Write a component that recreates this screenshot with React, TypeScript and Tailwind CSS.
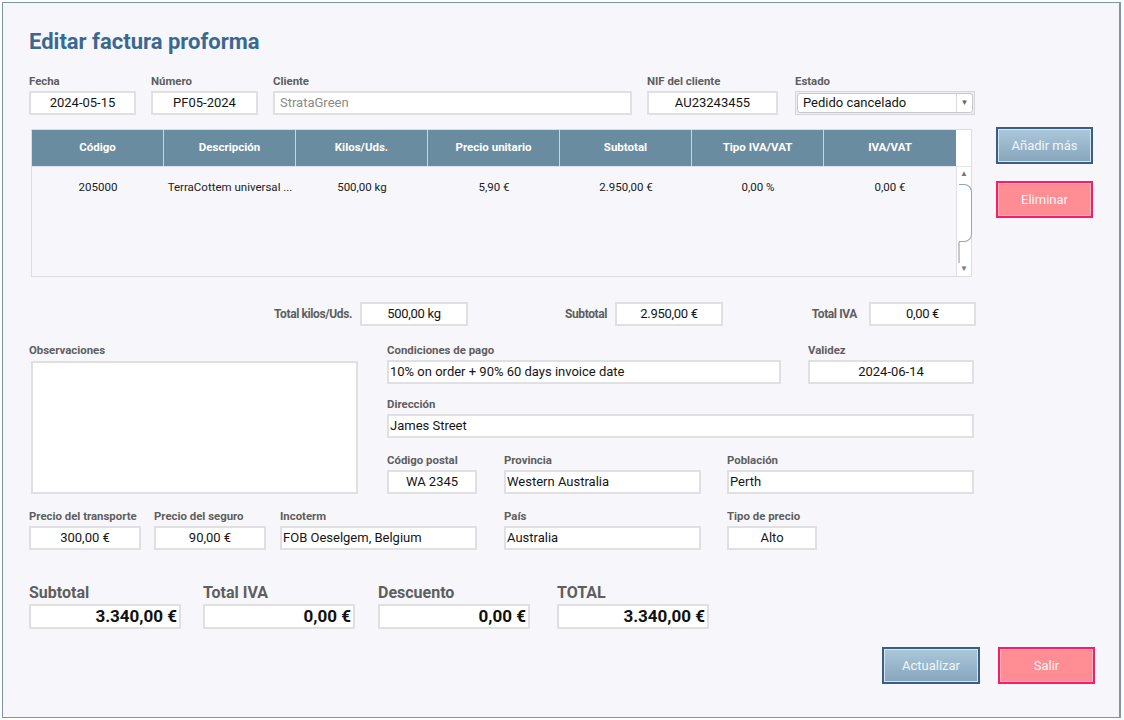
import React from "react"

const font = { fontFamily: "Roboto, 'Noto Sans', sans-serif" }

function Label({ children, className = "" }: { children: React.ReactNode; className?: string }) {
  return <div className={"h-4 text-[11.4px] leading-4 font-bold text-[#5e5e5e] whitespace-nowrap " + className}>{children}</div>
}

function Box({ children, align = "left", muted = false, className = "" }: { children?: React.ReactNode; align?: "left" | "center"; muted?: boolean; className?: string }) {
  return (
    <div
      className={
        "h-6 bg-white border-2 border-[#e0e0e3] text-[13px] leading-5 whitespace-nowrap overflow-hidden " +
        (align === "center" ? "text-center " : "pl-[1px] ") +
        (muted ? "text-[#8a8a8a] pl-[5px] " : "text-[#151515] ") +
        className
      }
    >
      {children}
    </div>
  )
}

function Field({ label, value, w, ml = 0, align = "left", muted = false }: { label: string; value: string; w: number; ml?: number; align?: "left" | "center"; muted?: boolean }) {
  return (
    <div className="flex flex-col" style={{ width: w, marginLeft: ml }}>
      <Label>{label}</Label>
      <div className="h-[2px]" />
      <Box align={align} muted={muted}>{value}</Box>
    </div>
  )
}

function BlueButton({ children, w }: { children: React.ReactNode; w: number }) {
  return (
    <button
      className="h-[37px] border-2 border-[#3a5f86] bg-gradient-to-b from-[#acc7da] to-[#86a6bc] shadow-[inset_0_0_0_1px_#d6e4ee] text-[13px] text-[#f2f6f9]"
      style={{ width: w }}
    >
      {children}
    </button>
  )
}

function PinkButton({ children, w, ml = 0 }: { children: React.ReactNode; w: number; ml?: number }) {
  return (
    <button
      className="h-[37px] border-2 border-[#ff1a68] bg-[#ff8d93] shadow-[inset_0_0_0_1px_#ffb3ba] text-[13px] text-[#fff5f6]"
      style={{ width: w, marginLeft: ml }}
    >
      {children}
    </button>
  )
}

const columns = ["Código", "Descripción", "Kilos/Uds.", "Precio unitario", "Subtotal", "Tipo IVA/VAT", "IVA/VAT"]
const row = ["205000", "TerraCottem universal ...", "500,00 kg", "5,90 €", "2.950,00 €", "0,00 %", "0,00 €"]

function SummaryField({ label, value, ml = 0 }: { label: string; value: string; ml?: number }) {
  return (
    <div className="flex flex-col w-[152px]" style={{ marginLeft: ml }}>
      <div className="h-5 text-[16px] leading-5 font-bold text-[#5e5e5e]">{label}</div>
      <div className="h-[25px] mt-[1px] bg-white border-2 border-[#e0e0e3] text-[17px] leading-[21px] font-bold text-right pr-[2px] text-[#111]">
        {value}
      </div>
    </div>
  )
}

export default function App() {
  return (
    <div className="w-[1124px] h-[720px] bg-white overflow-hidden" style={font}>
      <div className="ml-[2px] mt-[2px] w-[1119px] h-[716px] bg-[#f7f7fb] border border-[#7c95ad] border-r-2 pl-[26px] pt-[25px]">
        {/* Title */}
        <h1 className="h-7 text-[22px] leading-7 font-bold text-[#3b6891]">Editar factura proforma</h1>

        {/* Header fields */}
        <div className="flex items-start mt-[17px]">
          <Field label="Fecha" value="2024-05-15" w={107} align="center" />
          <Field label="Número" value="PF05-2024" w={107} ml={15} align="center" />
          <Field label="Cliente" value="StrataGreen" w={359} ml={15} muted />
          <Field label="NIF del cliente" value="AU23243455" w={131} ml={15} align="center" />
          <div className="flex flex-col w-[180px] ml-[17px]">
            <Label>Estado</Label>
            <div className="h-[2px]" />
            <div className="h-6 bg-[#ececf1] border border-[#d6d6dc] p-[1px] flex">
              <div className="flex-1 flex bg-white border border-[#c9c9cf] rounded-[3px] overflow-hidden">
                <div className="flex-1 text-[13px] leading-[18px] pl-[5px] text-[#151515]">Pedido cancelado</div>
                <div className="w-[16px] border-l border-[#dcdce0] flex items-center justify-center text-[8px] text-[#666]">▼</div>
              </div>
            </div>
          </div>
        </div>

        {/* Lines table + actions */}
        <div className="flex items-start mt-[12px]">
          <div className="ml-[2px] mt-[2px] w-[941px] h-[148px] border border-[#dcdce2] flex flex-col">
            <div className="flex h-9 bg-white">
              {columns.map((c, i) => (
                <div
                  key={c}
                  className={
                    "w-[132px] h-9 bg-[#6a8ca1] text-white text-[11.5px] font-bold flex items-center justify-center " +
                    (i < columns.length - 1 ? "border-r border-[#c7d5de]" : "")
                  }
                >
                  {c}
                </div>
              ))}
            </div>
            <div className="flex flex-1 border-t border-[#e2e2e8]">
              <div className="flex-1 flex items-start pt-[12px]">
                {row.map((v, i) => (
                  <div key={i} className="w-[132px] text-center text-[11.5px] leading-4 text-[#202020] whitespace-nowrap">
                    {v}
                  </div>
                ))}
              </div>
              <div className="w-[15px] bg-white border-l border-[#e0e0e6] flex flex-col items-center">
                <div className="text-[8px] leading-[12px] text-[#777] mt-[1px]">▲</div>
                <div className="w-[13px] h-[58px] mt-[4px] ml-[2px] border border-[#8fa6bc] rounded-r-[8px] border-l-0 bg-white" />
                <div className="w-[13px] flex-1 border-l-2 border-[#c8c8cc] ml-[1px]" />
                <div className="text-[8px] leading-[12px] text-[#777] mb-[1px]">▼</div>
              </div>
            </div>
          </div>
          <div className="ml-[24px] flex flex-col gap-[17px]">
            <BlueButton w={97}>Añadir más</BlueButton>
            <PinkButton w={97}>Eliminar</PinkButton>
          </div>
        </div>

        {/* Line totals */}
        <div className="flex items-center mt-[25px] text-[12px] font-bold text-[#5e5e5e] tracking-[-0.4px]">
          <div className="w-[323px] text-right">Total kilos/Uds.</div>
          <Box align="center" className="ml-[8px] w-[108px] tracking-[-0.3px] font-normal">500,00 kg</Box>
          <div className="w-[139px] text-right">Subtotal</div>
          <Box align="center" className="ml-[8px] w-[108px] tracking-[-0.3px] font-normal">2.950,00 €</Box>
          <div className="w-[134px] text-right">Total IVA</div>
          <Box align="center" className="ml-[12px] w-[107px] tracking-[-0.3px] font-normal">0,00 €</Box>
        </div>

        {/* Observations + address */}
        <div className="flex mt-[16px]">
          <div className="w-[328px] flex flex-col">
            <Label>Observaciones</Label>
            <div className="ml-[2px] mt-[3px] w-[327px] h-[133px] bg-white border-2 border-[#e0e0e3]" />
          </div>
          <div className="ml-[30px] flex flex-col">
            <div className="flex">
              <Field label="Condiciones de pago" value="10% on order + 90% 60 days invoice date" w={394} />
              <Field label="Validez" value="2024-06-14" w={166} ml={27} align="center" />
            </div>
            <div className="flex mt-[12px]">
              <Field label="Dirección" value="James Street" w={587} />
            </div>
            <div className="flex mt-[14px]">
              <Field label="Código postal" value="WA 2345" w={90} align="center" />
              <Field label="Provincia" value="Western Australia" w={197} ml={27} />
              <Field label="Población" value="Perth" w={247} ml={26} />
            </div>
          </div>
        </div>

        {/* Shipping */}
        <div className="flex mt-[14px]">
          <Field label="Precio del transporte" value="300,00 €" w={112} align="center" />
          <Field label="Precio del seguro" value="90,00 €" w={112} ml={13} align="center" />
          <Field label="Incoterm" value="FOB Oeselgem, Belgium" w={197} ml={14} />
          <Field label="País" value="Australia" w={197} ml={27} />
          <Field label="Tipo de precio" value="Alto" w={90} ml={26} align="center" />
        </div>

        {/* Summary */}
        <div className="flex mt-[33px]">
          <SummaryField label="Subtotal" value="3.340,00 €" />
          <SummaryField label="Total IVA" value="0,00 €" ml={22} />
          <SummaryField label="Descuento" value="0,00 €" ml={23} />
          <SummaryField label="TOTAL" value="3.340,00 €" ml={27} />
        </div>

        {/* Footer actions */}
        <div className="flex mt-[18px]">
          <div className="ml-[853px]">
            <BlueButton w={98}>Actualizar</BlueButton>
          </div>
          <PinkButton w={97} ml={18}>Salir</PinkButton>
        </div>
      </div>
    </div>
  )
}
